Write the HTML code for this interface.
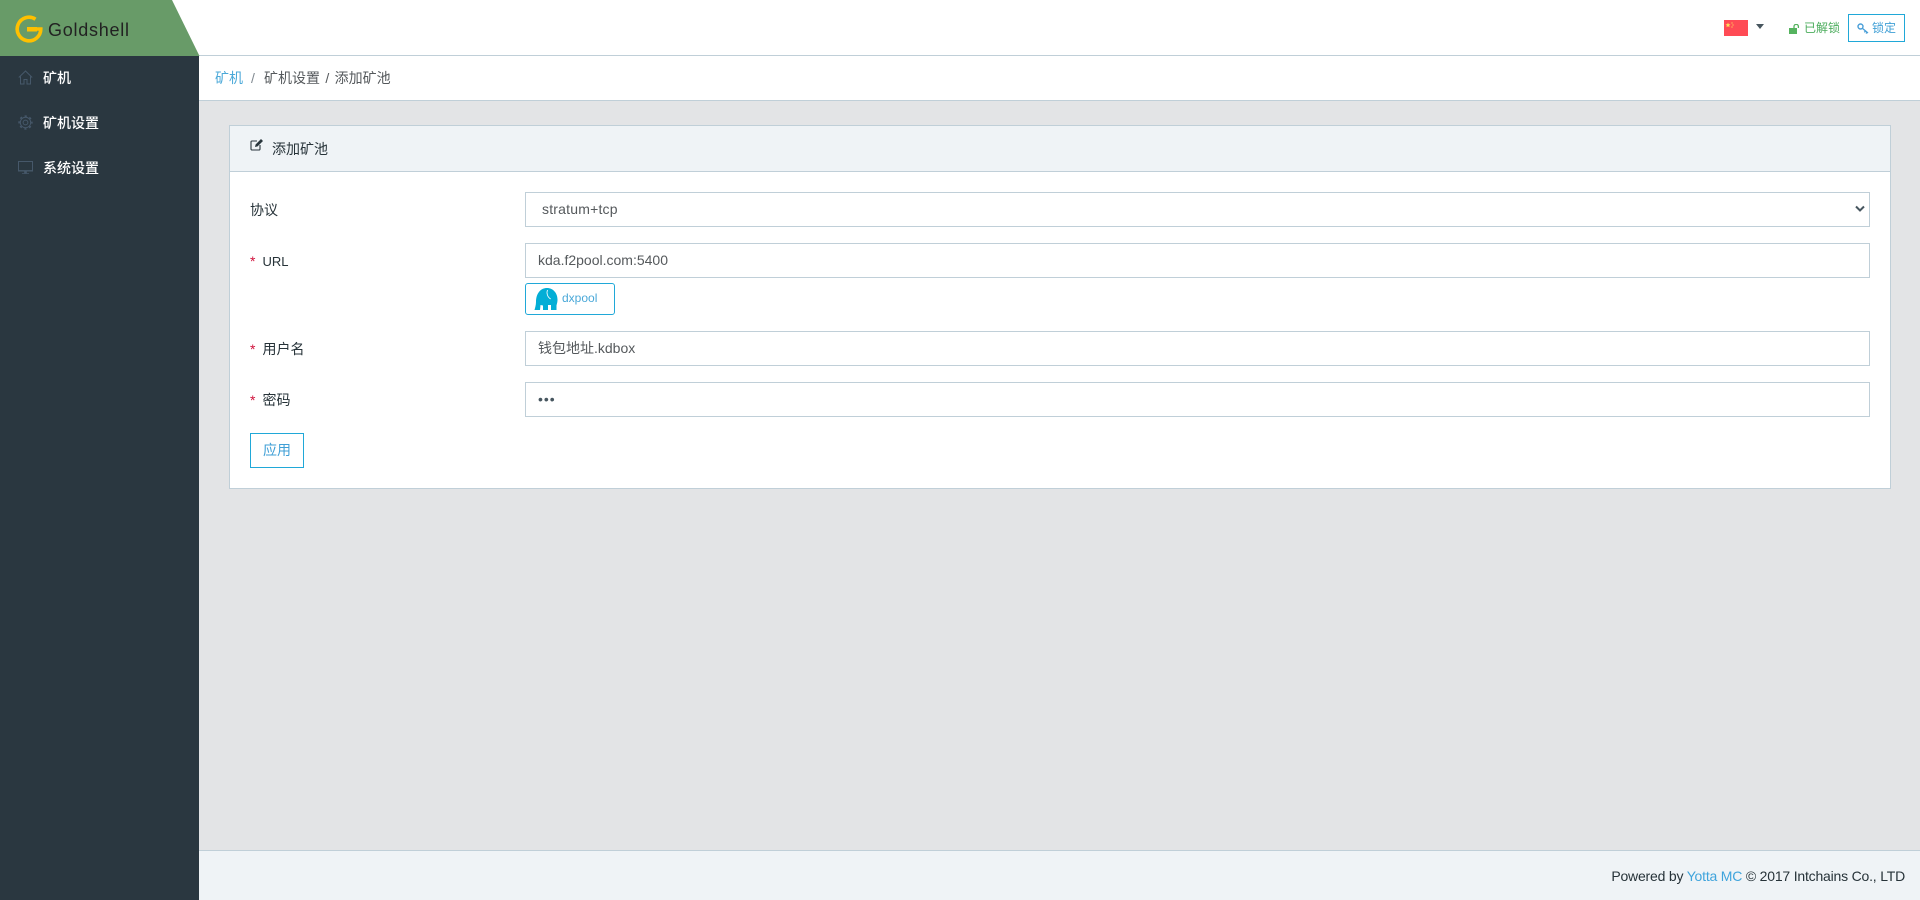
<!DOCTYPE html>
<html lang="zh"><head><meta charset="utf-8"><title>Goldshell</title>
<style>
*{box-sizing:border-box}
html,body{margin:0;padding:0;width:1920px;height:900px;overflow:hidden;background:#e3e4e6;font-family:"Liberation Sans","Noto Sans CJK SC",sans-serif;font-size:14px;color:#29363d}
.a{position:absolute;white-space:nowrap;line-height:20px}
.box{position:absolute;background:#fff;border:1px solid #c0cfd8}
.inp{left:525px;width:1345px;height:35px;padding-left:12px;line-height:33px;color:#55595c}
.lab{left:250px;color:#263238}
.req{color:#d0103a;margin-right:7px}
svg{position:absolute;display:block}
</style></head><body>
<div class="a" style="left:0;top:0;width:1920px;height:56px;background:#fff;border-bottom:1px solid #c0cfd8"></div>
<svg style="left:0;top:0" width="200" height="56"><polygon points="0,0 172,0 199.500,56 0,56" fill="#689b68"/></svg>
<svg style="left:15px;top:15px" width="28" height="28" viewBox="0 0 28 28"><path d="M20.500 4.200A11.800 11.800 0 1 0 25.800 14H14" fill="none" stroke="#ffc000" stroke-width="3.600"/><rect x="12" y="12" width="10" height="4.500" fill="#ffc000"/></svg>
<div class="a" style="left:48px;top:18px;font-size:18px;line-height:24px;color:#222;letter-spacing:.75px">Goldshell</div>

<svg style="left:1724px;top:20px" width="24" height="16" viewBox="0 0 24 16"><rect width="24" height="16" fill="#ff4b55"/><path d="M4 2.500l.7 1.800 1.800.1-1.400 1.100.5 1.800L4 6.300l-1.600 1 .5-1.800-1.400-1.100 1.800-.1z" fill="#ffe15a"/><circle cx="8" cy="3" r=".6" fill="#ffe15a"/><circle cx="9" cy="5" r=".6" fill="#ffe15a"/><circle cx="8" cy="7" r=".6" fill="#ffe15a"/></svg>
<div class="a" style="left:1756px;top:24px;width:0;height:0;line-height:0;border:4px solid transparent;border-top:5px solid #47565f;border-bottom:0"></div>
<svg style="left:1789px;top:24px" width="11" height="10" viewBox="0 0 11 10"><rect x="0" y="4" width="8" height="6" fill="#55b35f"/><path d="M5 4V2.500a2.200 2.200 0 0 1 4.400 0V4" fill="none" stroke="#55b35f" stroke-width="1.300"/></svg>
<div class="a" style="left:1804px;top:18px;font-size:12px;color:#4bac5c">已解锁</div>
<div class="a" style="left:1848px;top:14px;width:57px;height:28px;border:1px solid #20a8d8;background:#fff"></div>
<svg style="left:1857px;top:23px" width="12" height="12" viewBox="0 0 12 12"><circle cx="3.500" cy="3.500" r="2.500" fill="none" stroke="#4a9fd8" stroke-width="1.400"/><path d="M5.300 5.300L11 10M8.500 8l-1.200 1.300M10 9.300l-1 1.200" fill="none" stroke="#4a9fd8" stroke-width="1.300"/></svg>
<div class="a" style="left:1872px;top:18px;font-size:12px;color:#3f9fd6">锁定</div>

<div class="a" style="left:0;top:56px;width:199px;height:844px;background:#2a3740"></div>
<svg style="left:18px;top:70px" width="15" height="15" viewBox="0 0 15 15"><path d="M.8 7.500L7.500 1l6.700 6.500M2.500 6.500V14H6V9.500h3V14h3.500V6.500" fill="none" stroke="#46586a" stroke-width="1"/></svg>
<div class="a" style="left:43px;top:68px;color:#fff;font-weight:500">矿机</div>
<svg style="left:18px;top:115px" width="15" height="15" viewBox="0 0 15 15"><circle cx="7.500" cy="7.500" r="2.400" fill="none" stroke="#46586a"/><circle cx="7.500" cy="7.500" r="5.200" fill="none" stroke="#46586a"/><circle cx="7.500" cy="7.500" r="6.400" fill="none" stroke="#46586a" stroke-width="1.500" stroke-dasharray="2.200 2.830" stroke-dashoffset="1.100"/></svg>
<div class="a" style="left:43px;top:113px;color:#fff;font-weight:500">矿机设置</div>
<svg style="left:18px;top:160px" width="15" height="15" viewBox="0 0 15 15"><rect x=".5" y="1.500" width="14" height="9.500" fill="none" stroke="#46586a"/><path d="M1 10.500h13V11H1zM6.500 11h2v2h-2zM4 13.500h7" fill="#46586a" stroke="#46586a" stroke-width=".7"/></svg>
<div class="a" style="left:43px;top:158px;color:#fff;font-weight:500">系统设置</div>

<div class="a" style="left:199px;top:56px;width:1721px;height:45px;background:#fff;border-bottom:1px solid #c0cfd8"></div>
<div class="a" style="left:215px;top:68px;color:#4aa8d8">矿机</div>
<div class="a" style="left:251px;top:68px;color:#818a91">/</div>
<div class="a" style="left:264px;top:68px;color:#55595c;word-spacing:1.500px">矿机设置 / 添加矿池</div>

<div class="box" style="left:229px;top:125px;width:1662px;height:364px"></div>
<div class="a" style="left:230px;top:126px;width:1660px;height:46px;background:#eff3f6;border-bottom:1px solid #c0cfd8"></div>
<svg style="left:250px;top:138px" width="14" height="13" viewBox="0 0 14 13"><path d="M10 7v4a1 1 0 0 1-1 1H2a1 1 0 0 1-1-1V4a1 1 0 0 1 1-1h5" fill="none" stroke="#29363d" stroke-width="1.100"/><path d="M5 9l.6-2.500L11 1l2 2-5.400 5.400z" fill="#29363d"/></svg>
<div class="a" style="left:272px;top:139px;color:#263238">添加矿池</div>

<div class="a lab" style="top:200px">协议</div>
<div class="box inp" style="top:192px;padding-left:16px;letter-spacing:.2px">stratum+tcp</div>
<svg style="left:1855px;top:205px" width="10" height="8" viewBox="0 0 10 8"><path d="M1 1.500L5 5.500 9 1.500" fill="none" stroke="#47565f" stroke-width="2"/></svg>

<div class="a lab" style="top:251px"><span class="req">*</span><span style="font-size:13px">URL</span></div>
<div class="box inp" style="top:243px">kda.f2pool.com:5400</div>
<div class="a" style="left:525px;top:283px;width:90px;height:32px;border:1px solid #20a8d8;border-radius:3px;background:#fff"></div>
<svg style="left:534px;top:287px" width="24" height="24" viewBox="0 0 24 24"><path d="M0.500 23C1 21 2 18 2 15 2 6 7 1 13 1c6 0 10.500 5 10.500 11.500 0 3.500-1 5-1 6.500V23h-5.500v-5h-3v5H9v-4.500L6.500 18 6 23z" fill="#03aed6"/><path d="M13.500 3c-1.200 3-.2 7 3.200 9" fill="none" stroke="#fff" stroke-width=".8"/></svg>
<div class="a" style="left:562px;top:288px;font-size:12px;color:#4aa8d8">dxpool</div>

<div class="a lab" style="top:339px"><span class="req">*</span>用户名</div>
<div class="box inp" style="top:331px">钱包地址.kdbox</div>

<div class="a lab" style="top:390px"><span class="req">*</span>密码</div>
<div class="box inp" style="top:382px"><span style="letter-spacing:1px;font-size:14px;color:#47565f">•••</span></div>

<div class="a" style="left:250px;top:433px;width:54px;height:35px;border:1px solid #20a8d8;background:#fff;text-align:center;line-height:33px;color:#3f9fd6">应用</div>

<div class="a" style="left:199px;top:850px;width:1721px;height:50px;background:#eff3f6;border-top:1px solid #c0cfd8"></div>
<div class="a" style="right:15px;top:866px;color:#263238;letter-spacing:-.2px">Powered by <span style="color:#3fa4dc">Yotta MC</span> © 2017 Intchains Co., LTD</div>
</body></html>
